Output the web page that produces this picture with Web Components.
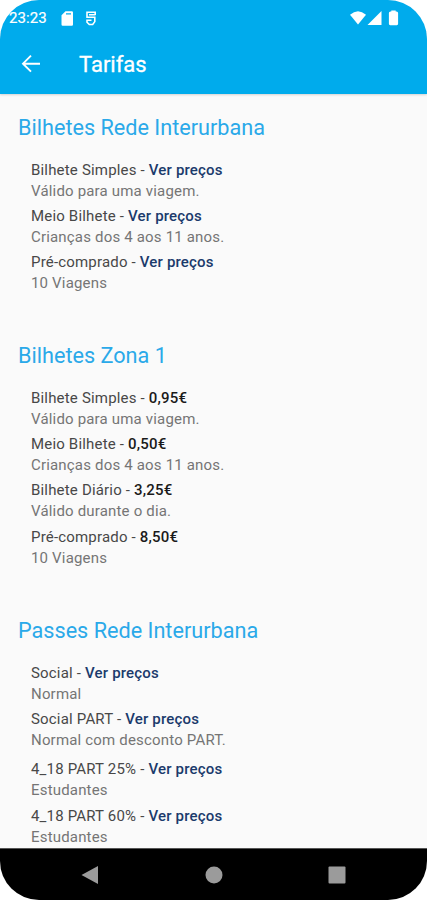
<!DOCTYPE html>
<html lang="pt">
<head>
<meta charset="utf-8">
<meta name="viewport" content="width=device-width, initial-scale=1">
<title>Tarifas</title>
<style>
  html,body{margin:0;height:100%;background:#fff;overflow:hidden}
</style>
</head>
<body>
<phone-screen>
  <status-bar slot="top" time="23:23"></status-bar>
  <app-bar slot="top">Tarifas</app-bar>
  <fare-section heading="Bilhetes Rede Interurbana">
    <fare-item name="Bilhete Simples" link="Ver preços">Válido para uma viagem.</fare-item>
    <fare-item name="Meio Bilhete" link="Ver preços">Crianças dos 4 aos 11 anos.</fare-item>
    <fare-item name="Pré-comprado" link="Ver preços">10 Viagens</fare-item>
  </fare-section>
  <fare-section heading="Bilhetes Zona 1">
    <fare-item name="Bilhete Simples" price="0,95€">Válido para uma viagem.</fare-item>
    <fare-item name="Meio Bilhete" price="0,50€">Crianças dos 4 aos 11 anos.</fare-item>
    <fare-item name="Bilhete Diário" price="3,25€">Válido durante o dia.</fare-item>
    <fare-item name="Pré-comprado" price="8,50€">10 Viagens</fare-item>
  </fare-section>
  <fare-section heading="Passes Rede Interurbana">
    <fare-item name="Social" link="Ver preços">Normal</fare-item>
    <fare-item name="Social PART" link="Ver preços">Normal com desconto PART.</fare-item>
    <fare-item group name="4_18 PART 25%" link="Ver preços">Estudantes</fare-item>
    <fare-item name="4_18 PART 60%" link="Ver preços">Estudantes</fare-item>
  </fare-section>
  <nav-bar slot="bottom"></nav-bar>
</phone-screen>

<script>
(function () {
  // shared base: each element only supplies its shadow markup
  class Base extends HTMLElement {
    constructor() { super(); this.attachShadow({ mode: "open" }); }
    connectedCallback() { this.shadowRoot.innerHTML = this.html(); }
  }

  class PhoneScreen extends Base {
    html() {
      return `
        <style>
          :host{display:flex;flex-direction:column;width:427px;height:900px;overflow:hidden;border-radius:39px;background:#fafafa;font-family:Roboto,"Liberation Sans",sans-serif}
          header{flex:none;background:#00abec;box-shadow:0 1px 2px rgba(0,0,0,.16);z-index:1}
          main{flex:1;min-height:0;overflow:hidden;padding-top:20.700px}
        </style>
        <header><slot name="top"></slot></header>
        <main><slot></slot></main>
        <slot name="bottom"></slot>`;
    }
  }

  class StatusBar extends Base {
    html() {
      return `
        <style>
          :host{display:flex;align-items:center;height:36px;padding:0 28px 0 9px;box-sizing:border-box;color:#fff;font-size:15px}
          .time{width:52px;letter-spacing:.1px;-webkit-text-stroke:.2px #fff}
          svg{display:block;fill:#fff}
          .gap{flex:1}
          .sd{margin-right:11px}
        </style>
        <span class="time">${this.getAttribute("time")}</span>
        <svg class="sd" width="13" height="15" viewBox="0 0 13 15"><path fill-rule="evenodd" d="M4.500.3h6.300q1.200 0 1.200 1.200v12q0 1.200-1.200 1.200H1.700Q.5 14.700.5 13.500V4.300ZM5 2.300v1.200h5V2.300Z"/></svg>
        <svg width="12" height="15" viewBox="0 0 12 15"><path fill="none" stroke="#fff" stroke-width="1.600" d="M10.200 4.300V1.200H2v5.100h7.800v4.300L7.700 13.500H4.300L2 11.200V9.300h4.500M4 3.800h6"/></svg>
        <span class="gap"></span>
        <svg width="50" height="16" viewBox="0 0 50 16">
          <path d="M1 4.800Q9 -2.200 17 4.800L9 14.500Z"/>
          <path d="M32.500 1v14H18.500Z"/>
          <path d="M42.300.5h4.400v1h.8q1.600 0 1.600 1.500v10.800q0 1.400-1.300 1.400h-6.600q-1.300 0-1.300-1.400V3q0-1.500 1.600-1.500h.8Z"/>
        </svg>`;
    }
  }

  class AppBar extends Base {
    html() {
      return `
        <style>
          :host{display:flex;align-items:center;height:58px;padding:0 20px 2px;box-sizing:border-box;color:#fff;font-size:22px;-webkit-text-stroke:.3px #fff}
          svg{display:block;width:22px;margin-right:37px}
        </style>
        <svg width="22" height="20" viewBox="0 0 22 20"><path fill="none" stroke="#fff" stroke-width="1.900" d="M20 9.700H3M11 1.700 3 9.700l8 8"/></svg>
        <slot></slot>`;
    }
  }

  class FareSection extends Base {
    html() {
      return `
        <style>
          :host{display:block;padding:0 18px 45px}
          h2{margin:0 0 18.900px;font-size:21.650px;line-height:26px;font-weight:400;color:#2aa9e9;white-space:nowrap}
          .items{padding-left:13px}
        </style>
        <h2>${this.getAttribute("heading")}</h2>
        <div class="items"><slot></slot></div>`;
    }
  }

  class FareItem extends Base {
    html() {
      const link = this.getAttribute("link"), price = this.getAttribute("price");
      return `
        <style>
          :host{display:block;padding-bottom:4.200px;font-size:15px;line-height:21px;letter-spacing:.18px;white-space:nowrap;color:#757575}
          :host([group]){padding-top:4.400px}
          .name{color:#484848}
          b{font-weight:500;color:#1a1a1a}
          .link{color:#1b3a6c}
        </style>
        <div class="name">${this.getAttribute("name")} - <b class="${link ? "link" : "price"}">${link || price}</b></div>
        <div><slot></slot></div>`;
    }
  }

  class NavBar extends Base {
    html() {
      return `
        <style>
          :host{display:flex;align-items:center;justify-content:space-between;flex:none;height:52px;padding:0 81px;box-sizing:border-box;background:#000;border-top:1px solid #555}
          svg{display:block;fill:#9b9b9b}
        </style>
        <svg width="18" height="18" viewBox="0 0 18 18"><path d="M.5 9 17 0v18Z"/></svg>
        <svg width="18" height="18" viewBox="0 0 18 18"><circle cx="9" cy="9" r="8.500"/></svg>
        <svg width="18" height="18" viewBox="0 0 18 18"><rect x=".5" y=".5" width="17" height="17" rx="1"/></svg>`;
    }
  }

  const defs = { "phone-screen": PhoneScreen, "status-bar": StatusBar, "app-bar": AppBar, "fare-section": FareSection, "fare-item": FareItem, "nav-bar": NavBar };
  for (const [name, cls] of Object.entries(defs)) customElements.define(name, cls);
})();
</script>
</body>
</html>
